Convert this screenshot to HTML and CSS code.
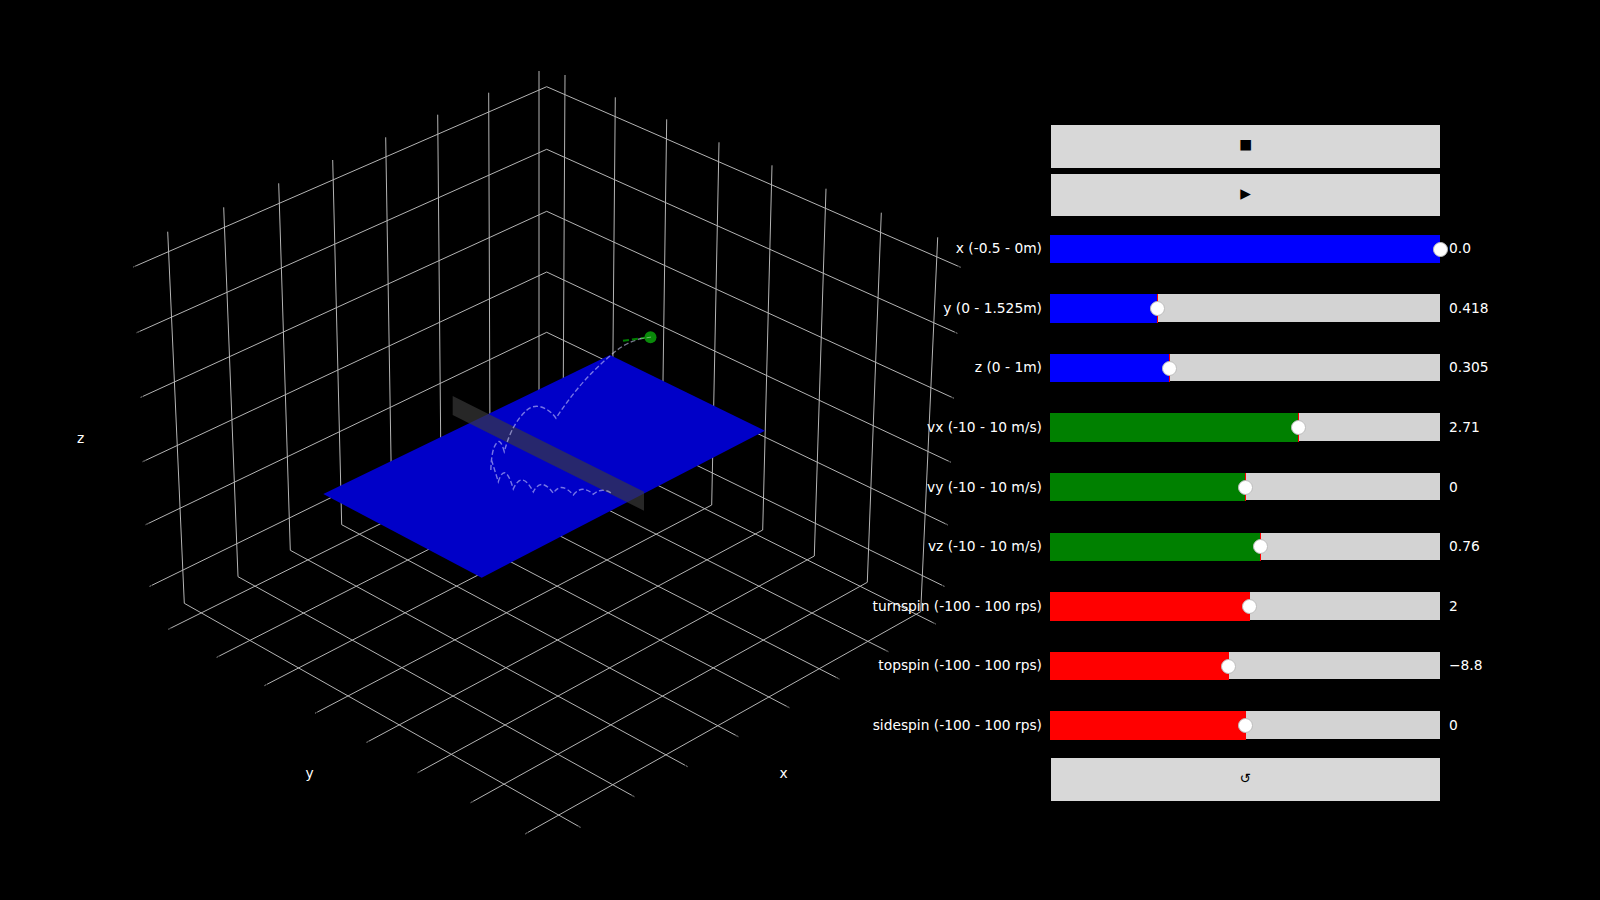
FILE: index.html
```html
<!DOCTYPE html>
<html lang="en">
<head>
<meta charset="utf-8">
<title>Ball trajectory</title>
<link rel="stylesheet" href="styles.css">
</head>
<body>
<main class="figure">
  <svg class="plot" viewBox="0 0 1600 900" width="1600" height="900">
    <path class="grid" d="M133.3 267L546.7 86.7L960.7 267.3M136.7 332.7L546.7 149.3L957.3 333.3M140 397.7L546.7 211.3L954 398.3M142.7 461.7L546.7 272L951 462.3M145.7 524.7L546.7 332.3L948 525M149 586.7L546.7 392L945 586.7"/>
    <path class="grid" d="M167.7 231.7L184.3 603.3L581 827.7M223.7 207.3L238 576.7L634.3 796.7M278.7 183.3L290.3 550.3L687.7 766.7M332.7 160L341.7 524.7L738.3 736.7M385.7 137.3L391.7 499.5L789.3 707.7M437.7 114.7L441 475L839.3 679M488.7 92.7L490 450L888.3 651.7M539 71L539 426L935.7 624"/>
    <path class="grid" d="M937.7 237.3L920.7 611.7L525 834M881.3 212.7L867.3 582.3L470.7 802.7M826 188.7L814.3 556L417.7 772.7M772 165.3L762.7 530L366 742.7M719 142.3L711.7 505L315 713.3M666.7 119.3L661.6 480L264.3 685.7M615.3 97.3L612 456L216.7 657.3M565 75L563 433L168.3 629.3"/>
    <path class="tick" d="M133.3 267l3-1.3M136.7 332.7l3-1.3M140 397.7l3-1.4M142.7 461.7l3-1.4M145.7 524.7l3-1.4M149 586.7l3-1.5M525 834l3-1.7M470.7 802.7l3-1.7M417.7 772.7l3-1.6M366 742.7l3-1.6M315 713.3l3-1.6M264.3 685.7l3-1.6M216.7 657.3l3-1.5M168.3 629.3l3-1.5M960.7 267.3l-3-1.3M957.3 333.3l-3-1.3M954 398.3l-3-1.4M951 462.3l-3-1.4M948 525l-3-1.4M945 586.7l-3-1.5M581 827.7l-3-1.7M634.3 796.7l-3-1.7M687.7 766.7l-3-1.6M738.3 736.7l-3-1.6M789.3 707.7l-3-1.6M839.3 679l-3-1.5M888.3 651.7l-3-1.5M935.7 624l-3-1.5"/>
    <polygon class="table" points="323.3,494 610,355 765,430.7 481.7,577.7"/>
    <polygon class="net" points="452.7,396 644,491.7 644,510.7 452.7,415"/>
    <path class="trail" d="M650 337C634 339 622 345 610 356Q580 381 556 418.3C549 408 536 402 527 410S510 430 504.3 451.7Q501 440 498.3 441.7C492 445 491 462 490.8 472M491.5 460L498.3 481.7Q505 460.6 513.3 489Q522 469.5 533.3 492Q541 476.3 553.3 493.3Q561 480.8 573.3 495Q582 484 593.3 494.3Q602 486.4 612.7 494"/>
    <line class="velocity" x1="623" y1="340.7" x2="648" y2="337.3"/>
    <circle class="ball" cx="650.5" cy="337.3" r="6"/>
    <line class="ball-mark" x1="640" y1="338.8" x2="653" y2="336.8"/>
    <text class="axis" x="80.6" y="438" text-anchor="middle" dominant-baseline="central">z</text>
    <text class="axis" x="309.7" y="773" text-anchor="middle" dominant-baseline="central">y</text>
    <text class="axis" x="783.7" y="773" text-anchor="middle" dominant-baseline="central">x</text>
  </svg>

  <section class="panel">
    <button class="btn btn-stop" type="button">■</button>
    <button class="btn btn-play" type="button">▶</button>

    <div class="sliders">
      <div class="row">
        <span class="label">x (-0.5 - 0m)</span>
        <div class="slider blue full" style="--v:100%"><div class="track"></div><div class="fill"></div><div class="thumb"></div></div>
        <span class="value">0.0</span>
      </div>
      <div class="row">
        <span class="label">y (0 - 1.525m)</span>
        <div class="slider blue" style="--v:27.4%"><div class="track"></div><div class="fill"></div><div class="thumb"></div></div>
        <span class="value">0.418</span>
      </div>
      <div class="row">
        <span class="label">z (0 - 1m)</span>
        <div class="slider blue" style="--v:30.5%"><div class="track"></div><div class="fill"></div><div class="thumb"></div></div>
        <span class="value">0.305</span>
      </div>
      <div class="row">
        <span class="label">vx (-10 - 10 m/s)</span>
        <div class="slider green" style="--v:63.55%"><div class="track"></div><div class="fill"></div><div class="thumb"></div></div>
        <span class="value">2.71</span>
      </div>
      <div class="row">
        <span class="label">vy (-10 - 10 m/s)</span>
        <div class="slider green" style="--v:50%"><div class="track"></div><div class="fill"></div><div class="thumb"></div></div>
        <span class="value">0</span>
      </div>
      <div class="row">
        <span class="label">vz (-10 - 10 m/s)</span>
        <div class="slider green" style="--v:53.8%"><div class="track"></div><div class="fill"></div><div class="thumb"></div></div>
        <span class="value">0.76</span>
      </div>
      <div class="row">
        <span class="label">turnspin (-100 - 100 rps)</span>
        <div class="slider red" style="--v:51%"><div class="track"></div><div class="fill"></div><div class="thumb"></div></div>
        <span class="value">2</span>
      </div>
      <div class="row">
        <span class="label">topspin (-100 - 100 rps)</span>
        <div class="slider red" style="--v:45.6%"><div class="track"></div><div class="fill"></div><div class="thumb"></div></div>
        <span class="value">−8.8</span>
      </div>
      <div class="row">
        <span class="label">sidespin (-100 - 100 rps)</span>
        <div class="slider red" style="--v:50%"><div class="track"></div><div class="fill"></div><div class="thumb"></div></div>
        <span class="value">0</span>
      </div>
    </div>

    <button class="btn btn-reset" type="button">↺</button>
  </section>
</main>
</body>
</html>
```

FILE: styles.css
```css
* { box-sizing: border-box; }

html, body {
  margin: 0;
  background: #000;
}

body {
  width: 1600px;
  height: 900px;
  overflow: hidden;
  font-family: "DejaVu Sans", sans-serif;
  font-size: 13.8px;
  color: #fff;
}

.figure {
  display: grid;
  grid-template: 900px / 1600px;
}

.plot,
.panel {
  grid-area: 1 / 1;
}

.plot { display: block; }

.grid {
  fill: none;
  stroke: #b4b4b4;
  stroke-width: 1;
}

.tick {
  fill: none;
  stroke: #383838;
  stroke-width: 1;
}

.table { fill: #0000c8; }

.net { fill: rgba(60, 60, 60, 0.65); }

.trail {
  fill: none;
  stroke: rgba(215, 215, 255, 0.55);
  stroke-width: 1.4;
  stroke-dasharray: 5 2.5;
}

.velocity {
  stroke: #008000;
  stroke-width: 2;
  stroke-dasharray: 6 3;
}

.ball { fill: #0a8a0a; }

.ball-mark {
  stroke: rgba(255, 255, 255, 0.4);
  stroke-width: 1;
  stroke-dasharray: 4.6 2;
}

.axis {
  fill: #fff;
  font-family: "DejaVu Sans", sans-serif;
  font-size: 13.8px;
}

.panel {
  display: flex;
  flex-direction: column;
  align-items: flex-start;
  padding: 125px 0 0 842px;
}

.btn {
  display: flex;
  align-items: center;
  justify-content: center;
  width: 389px;
  margin: 0 0 0 209px;
  padding: 0;
  border: 0;
  background: #d8d8d8;
  color: #000;
  font: inherit;
}

.btn-stop {
  height: 43px;
  padding-bottom: 5px;
}

.btn-play {
  height: 42px;
  margin-top: 6px;
  padding-bottom: 4px;
}

.btn-reset {
  height: 43px;
  margin-top: 18.16px;
  padding-bottom: 2px;
}

.sliders {
  display: flex;
  flex-direction: column;
  gap: 31.18px;
  margin-top: 18.8px;
}

.row {
  display: grid;
  grid-template-columns: 200px 390px auto;
  column-gap: 8px;
  align-items: center;
  height: 28.4px;
}

.label {
  text-align: right;
  white-space: nowrap;
  margin-top: -1.4px;
}

.value {
  padding-left: 1px;
  margin-top: -1.4px;
}

.slider {
  position: relative;
  height: 28.4px;
}

.track {
  height: 27.4px;
  background: #d3d3d3;
}

.fill {
  position: absolute;
  top: 0;
  bottom: 0;
  left: 0;
  width: calc(var(--v) + 1px);
  border-right: 1px solid #f00;
}

.full .fill {
  width: 100%;
  border-right: 0;
}

.blue .fill { background: #00f; }
.green .fill { background: #008000; }
.red .fill { background: #f00; }

.thumb {
  position: absolute;
  top: 50%;
  left: var(--v);
  width: 15px;
  height: 15px;
  margin: -7.4px 0 0 -7px;
  border: 1px solid #bdbdbd;
  border-radius: 50%;
  background: #fff;
}
```
